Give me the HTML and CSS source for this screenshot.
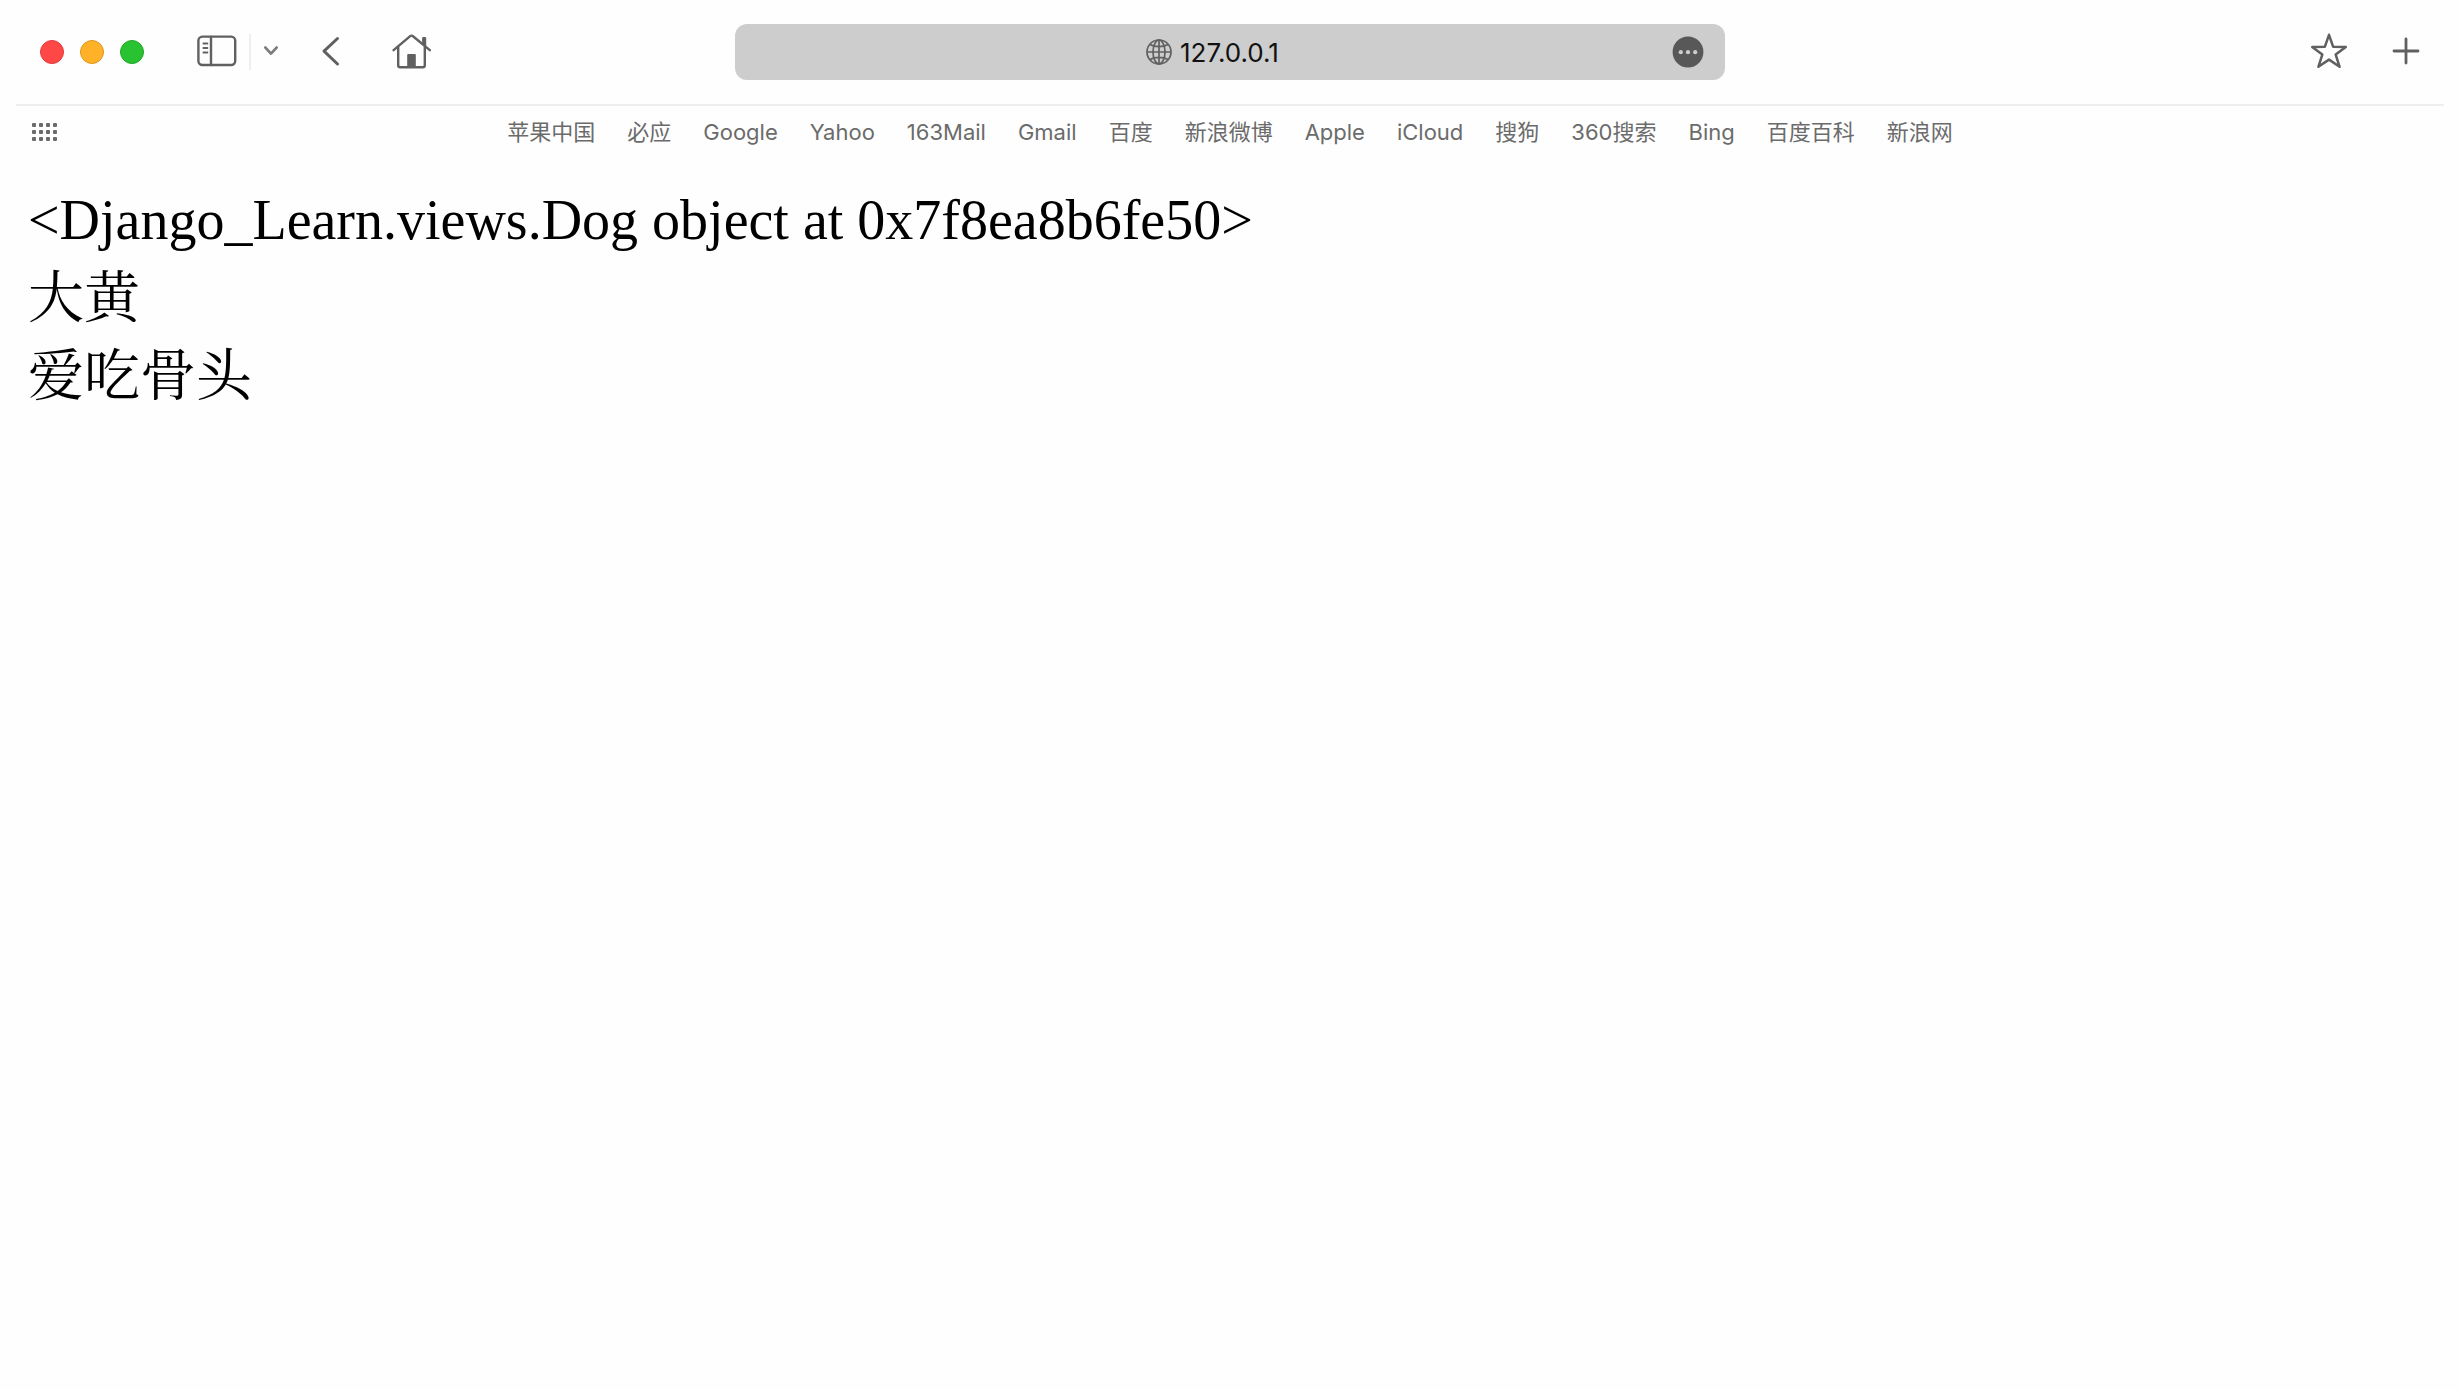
FILE: index.html
```html
<!DOCTYPE html>
<html lang="zh-CN">
<head>
<meta charset="utf-8">
<meta name="viewport" content="width=device-width, initial-scale=1">
<title>127.0.0.1</title>
<link rel="stylesheet" href="styles.css">
</head>
<body>
<header class="chrome">
  <div class="toolbar">
    <div class="tools">
      <div class="lights">
        <button class="light light-close" aria-label="关闭"></button>
        <button class="light light-min" aria-label="最小化"></button>
        <button class="light light-max" aria-label="缩放"></button>
      </div>
      <div class="sidebar-group">
        <button class="icon-btn" aria-label="边栏">
          <svg width="40" height="32" viewBox="0 0 40 32" fill="none" stroke="#606060" stroke-width="2.4" stroke-linecap="round"><rect x="1.4" y="1.6" width="36.8" height="28.4" rx="4"/><path d="M14 2v28"/><path d="M6.4 8.500h4M6.4 13h4M6.4 17.500h4" stroke-width="1.8"/></svg>
        </button>
        <span class="divider"></span>
        <button class="icon-btn" aria-label="标签页组">
          <svg width="16" height="12" viewBox="0 0 16 12" fill="none" stroke="#7b7b80" stroke-width="2.8" stroke-linecap="round" stroke-linejoin="round"><path d="M2.4 2.6L8 8.6l5.600-6"/></svg>
        </button>
      </div>
      <button class="icon-btn back" aria-label="后退">
        <svg width="20" height="32" viewBox="0 0 20 32" fill="none" stroke="#606060" stroke-width="3" stroke-linecap="round" stroke-linejoin="round"><path d="M16.500 3.500L3 16.200l13.500 12.800"/></svg>
      </button>
      <button class="icon-btn home" aria-label="主页">
        <svg width="40" height="36" viewBox="0 0 40 36" fill="none" stroke="#606060" stroke-width="2.400" stroke-linecap="round" stroke-linejoin="round"><path d="M1.600 17.200L18.200 3.200a2.200 2.200 0 0 1 2.800 0L37.800 17.200"/><path d="M6.200 14v18.200a2 2 0 0 0 2 2h22.600a2 2 0 0 0 2-2V14"/><path d="M30.800 5.200a.6.6 0 0 1 .6-.6h1.500a.6.6 0 0 1 .6.6v8l-2.700-2.200z" fill="#606060" stroke-width="1.400"/><path d="M15.200 34V22a1 1 0 0 1 1-1h6.600a1 1 0 0 1 1 1v12z" fill="#606060" stroke="none"/></svg>
      </button>
    </div>
    <form class="address">
      <label class="site">
        <svg width="26" height="26" viewBox="0 0 26 26" fill="none" stroke="#606060" stroke-width="1.700" role="img" aria-label="地址"><circle cx="13" cy="13" r="12"/><ellipse cx="13" cy="13" rx="6" ry="12"/><path d="M13 1v24M1 13h24M4 5.500c5 2.800 13 2.800 18 0M4 20.500c5-2.800 13-2.800 18 0"/></svg>
        <input class="url" type="text" value="127.0.0.1">
      </label>
      <button class="menu-btn" type="button" aria-label="页面菜单">
        <svg width="32" height="32" viewBox="0 0 32 32"><circle cx="16" cy="16" r="15.400" fill="#585858"/><g fill="#cdcdcd"><circle cx="8.800" cy="16.200" r="2.100"/><circle cx="16" cy="16.200" r="2.100"/><circle cx="23.200" cy="16.200" r="2.100"/></g></svg>
      </button>
    </form>
    <div class="actions">
      <button class="icon-btn" aria-label="添加书签">
        <svg width="38" height="36" viewBox="0 0 38 36" fill="none" stroke="#606060" stroke-width="2.500" stroke-linejoin="round"><path d="M19 1.800L23.100 13.700L35.800 13.900L25.700 21.600L29.600 33.800L19 26.600L8.400 33.800L12.300 21.600L2.200 13.900L14.900 13.700Z"/></svg>
      </button>
      <button class="icon-btn" aria-label="新建标签页">
        <svg width="28" height="28" viewBox="0 0 28 28" fill="none" stroke="#606060" stroke-width="2.800" stroke-linecap="round"><path d="M14 2v24M2 14h24"/></svg>
      </button>
    </div>
  </div>
  <nav class="bookmarks">
    <button class="grid-btn" aria-label="显示全部书签">
      <svg width="26" height="18" viewBox="0 0 26 18" fill="#6b6b6b"><g id="row"><rect width="4" height="4" rx="1"/><rect x="7" width="4" height="4" rx="1"/><rect x="14" width="4" height="4" rx="1"/><rect x="21" width="4" height="4" rx="1"/></g><use href="#row" y="7"/><use href="#row" y="14"/></svg>
    </button>
    <div class="links">
      <a href="#">苹果中国</a>
      <a href="#">必应</a>
      <a href="#">Google</a>
      <a href="#">Yahoo</a>
      <a href="#">163Mail</a>
      <a href="#">Gmail</a>
      <a href="#">百度</a>
      <a href="#">新浪微博</a>
      <a href="#">Apple</a>
      <a href="#">iCloud</a>
      <a href="#">搜狗</a>
      <a href="#">360搜索</a>
      <a href="#">Bing</a>
      <a href="#">百度百科</a>
      <a href="#">新浪网</a>
    </div>
  </nav>
</header>
<main class="page">
  <p>&lt;Django_Learn.views.Dog object at 0x7f8ea8b6fe50&gt;</p>
  <p>大黄</p>
  <p>爱吃骨头</p>
</main>
</body>
</html>
```
FILE: styles.css
```css
* {
  box-sizing: border-box;
}

body {
  margin: 0;
  background: #fefefe;
  color: #000;
}

button {
  padding: 0;
  border: 0;
  background: none;
}

svg {
  display: block;
}

.chrome {
  padding: 0 16px;
  font-family: Inter, "Noto Sans CJK SC", sans-serif;
}

.toolbar {
  display: grid;
  grid-template-columns: 1fr minmax(320px, 990px) 1fr;
  align-items: center;
  padding: 24px 24px;
  border-bottom: 2px solid #eee;
}

.tools,
.lights,
.sidebar-group,
.actions,
.site {
  display: flex;
  align-items: center;
}

.icon-btn {
  padding-bottom: 3px;
}

.lights {
  gap: 16px;
}

.light {
  width: 24px;
  height: 24px;
  border: 1px solid;
  border-radius: 50%;
}

.light-close {
  background: #ff4746;
  border-color: #e0393c;
}

.light-min {
  background: #ffb127;
  border-color: #dd9822;
}

.light-max {
  background: #29c231;
  border-color: #20a827;
}

.sidebar-group {
  gap: 12px;
  margin-left: 53px;
}

.divider {
  width: 2px;
  height: 36px;
  background: #eee;
}

.back {
  margin-left: 42px;
}

.home {
  margin-left: 51px;
}

.address {
  display: flex;
  align-items: center;
  height: 56px;
  padding: 0 21px;
  border-radius: 12px;
  background: #cdcdcd;
}

.site {
  flex: 1;
  justify-content: center;
  gap: 8px;
}

.url {
  width: 102px;
  padding: 2px 0 0;
  border: 0;
  background: none;
  color: #111;
  font: 26px/32px Inter, sans-serif;
}

.actions {
  justify-content: flex-end;
  gap: 44px;
}

.bookmarks {
  display: grid;
  grid-template-columns: 1fr auto 1fr;
  align-items: center;
  padding: 10px 16px;
}

.links {
  display: flex;
  gap: 32px;
}

.links a {
  color: #6b6b6b;
  font-size: 22px;
  line-height: 32px;
  text-decoration: none;
  white-space: nowrap;
}

.page {
  padding: 23px 28px;
  font: 56px/78px "Liberation Serif", "Noto Serif CJK SC", "Noto Sans CJK SC", serif;
}

.page p {
  margin: 0;
}
```
